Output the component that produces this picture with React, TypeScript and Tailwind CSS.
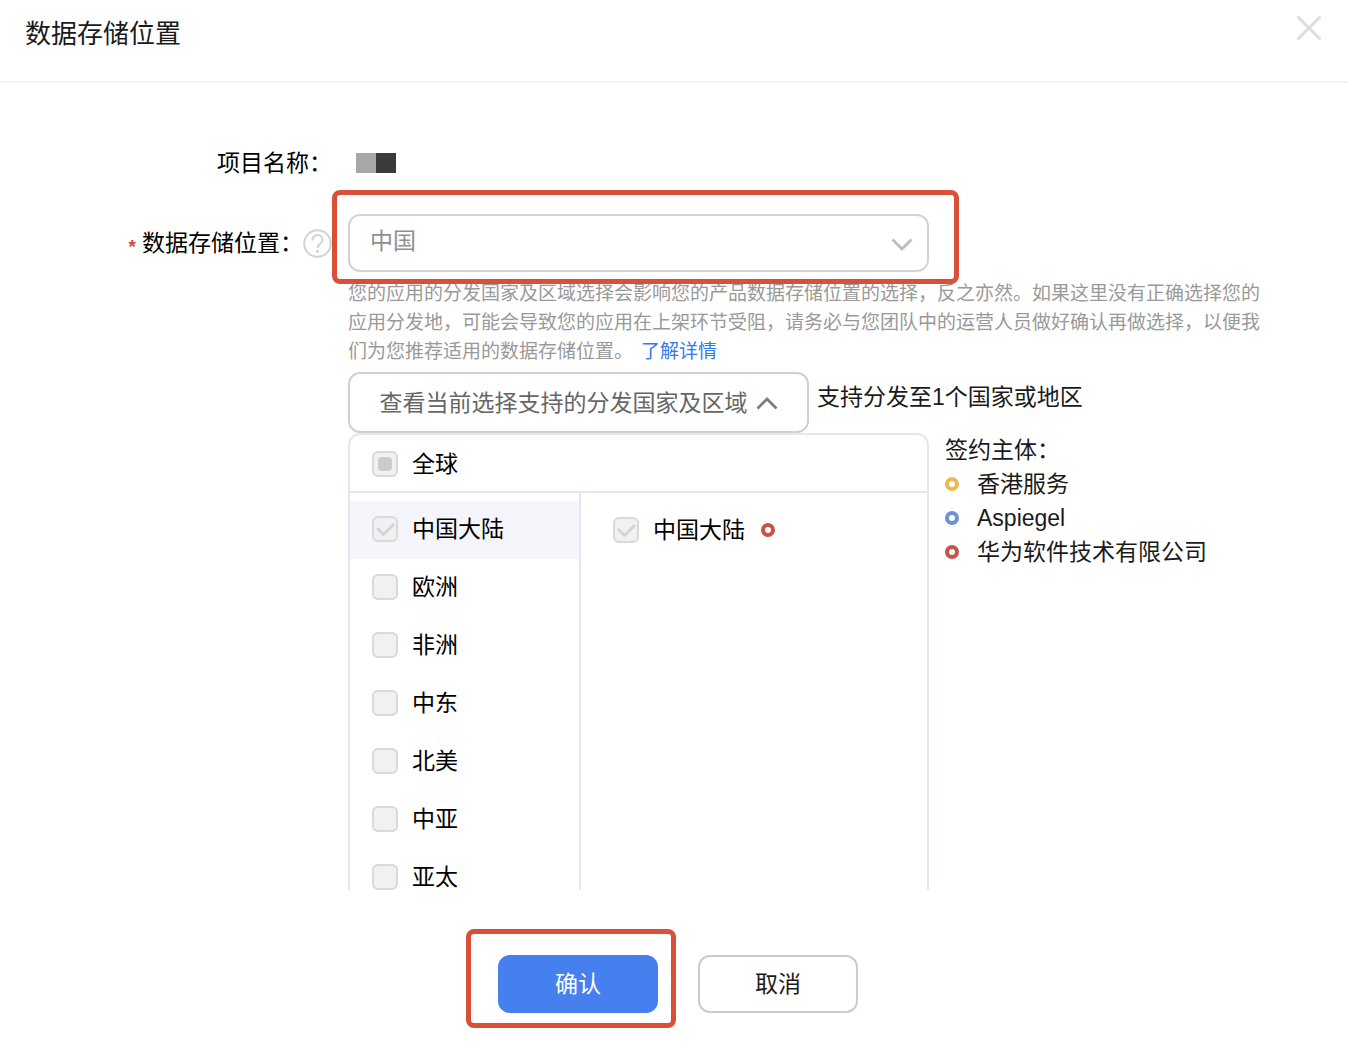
import React, { useState } from "react";

interface CheckBoxProps {
    id: string;
    state?: "none" | "checked" | "partial";
}

interface Entity {
    name: string;
    ring: string;
}

const REGIONS = ["中国大陆", "欧洲", "非洲", "中东", "北美", "中亚", "亚太"];

const ENTITIES: Entity[] = [
    { name: "香港服务", ring: "border-[#ebb94f]" },
    { name: "Aspiegel", ring: "border-[#6c92cf]" },
    { name: "华为软件技术有限公司", ring: "border-[#c4534a]" },
];

function CheckBox({ id, state = "none" }: CheckBoxProps) {
    return (
        <span className="grid shrink-0 place-items-center">
            <input
                id={id}
                type="checkbox"
                disabled
                checked={state !== "none"}
                readOnly
                className="col-start-1 row-start-1 size-[26px] appearance-none rounded-md border-2 border-[#d9d9d9] bg-[#f1f1f1]"
            />
            {state === "checked" && (
                <svg className="col-start-1 row-start-1 size-[26px]" viewBox="0 0 26 26" fill="none" stroke="#d2d2d2" strokeWidth="2.6">
                    <path d="M5 12l6.5 6.5L22 8" />
                </svg>
            )}
            {state === "partial" && <span className="col-start-1 row-start-1 size-[14px] rounded-sm bg-[#cbcbcb]" />}
        </span>
    );
}

function Ring({ color }: { color: string }) {
    return <span className={`size-[14px] shrink-0 rounded-full border-4 ${color}`} />;
}

export default function App() {
    const [open, setOpen] = useState(true);

    return (
        <div lang="zh-CN" className="min-h-screen bg-white pb-7 font-['Liberation_Sans','Noto_Sans_CJK_SC',sans-serif] text-[23px] leading-[34px] text-black">
            <header className="flex items-start justify-between border-b-2 border-[#f2f2f2] pt-4 pr-[26px] pb-[29px] pl-[25px]">
                <h1 className="text-[26px] leading-[36px] text-[#1a1a1a]">数据存储位置</h1>
                <button type="button" aria-label="关闭">
                    <svg className="size-[26px]" viewBox="0 0 26 26" fill="none" stroke="#dcdcdc" strokeWidth="3" strokeLinecap="round">
                        <path d="M2.5 1.5l21 21M23.5 1.5l-21 21" />
                    </svg>
                </button>
            </header>

            <main className="grid grid-cols-[332px_1fr] gap-x-4 pt-[63px]">
                <div className="text-right">项目名称：</div>
                <div className="flex items-center pl-2">
                    <span className="size-5 bg-[#a8a8a8]" />
                    <span className="size-5 bg-[#3b3b3b]" />
                </div>

                <div className="mt-[34px] flex h-[58px] items-center justify-end">
                    <span className="mr-1.5 pt-2 text-[19px] font-bold text-[#d9483b]">*</span>
                    <label htmlFor="location">数据存储位置：</label>
                    <svg className="size-[29px] shrink-0" viewBox="0 0 29 29" fill="none" stroke="#d2d2d2" strokeWidth="2">
                        <circle cx="14.5" cy="14.5" r="13.3" />
                        <path d="M9.4 11.5c0-3.4 2.2-5.4 5.1-5.4s5.1 2 5.1 4.8c0 3.8-5.1 4.2-5.1 8.1" />
                        <circle cx="14.5" cy="22.4" r="1.6" fill="#d2d2d2" stroke="none" />
                    </svg>
                </div>

                <div className="min-w-0">
                    <div className="relative mt-[34px] w-[581px]">
                        <select
                            id="location"
                            defaultValue="cn"
                            className="h-[58px] w-full appearance-none rounded-xl border-2 border-[#d4d4d4] bg-white px-5 pb-1 text-[#8f8f8f]"
                        >
                            <option value="cn">中国</option>
                        </select>
                        <svg className="pointer-events-none absolute top-6 right-4 h-3.5 w-[22px]" viewBox="0 0 22 14" fill="none" stroke="#bdbdbd" strokeWidth="2.8">
                            <path d="M1.5 1.5l9.5 9.5 9.5-9.5" />
                        </svg>
                        <div className="pointer-events-none absolute -top-6 -right-[30px] -bottom-3 -left-4 rounded-lg border-[5px] border-[#d95036]" />
                    </div>

                    <p className="mt-[7px] max-w-[930px] text-[19px] leading-[29px] text-[#999999]">
                        您的应用的分发国家及区域选择会影响您的产品数据存储位置的选择，反之亦然。如果这里没有正确选择您的应用分发地，可能会导致您的应用在上架环节受阻，请务必与您团队中的运营人员做好确认再做选择，以便我们为您推荐适用的数据存储位置。
                        <a href="#more" className="ml-2 text-[#3478f0]">了解详情</a>
                    </p>

                    <div className="mt-1.5 flex gap-2">
                        <button
                            type="button"
                            aria-expanded={open}
                            onClick={() => setOpen(!open)}
                            className="flex h-[61px] w-[461px] shrink-0 items-center justify-center gap-2 rounded-xl border-2 border-[#d0d0d0] text-[#666666]"
                        >
                            查看当前选择支持的分发国家及区域
                            <svg className="h-3.5 w-[22px]" viewBox="0 0 22 14" fill="none" stroke="#7d7d7d" strokeWidth="2.8">
                                <path d="M1.5 12.5L11 3l9.5 9.5" />
                            </svg>
                        </button>
                        <span className="pt-2 text-[#1a1a1a]">支持分发至1个国家或地区</span>
                    </div>

                    <div className="flex gap-4">
                        {open && (
                            <div className="flex h-[457px] w-[581px] shrink-0 flex-col overflow-hidden rounded-t-xl border-2 border-b-0 border-[#e4e7ed]">
                                <div className="flex shrink-0 items-center gap-3.5 border-b-2 border-[#e4e7ed] pt-3 pb-2.5 pl-[22px]">
                                    <CheckBox id="all" state="partial" />
                                    <label htmlFor="all">全球</label>
                                </div>
                                <div className="flex min-h-0 flex-1">
                                    <ul className="w-[231px] shrink-0 border-r-2 border-[#e4e7ed] pt-2">
                                        {REGIONS.map((region, i) => (
                                            <li key={region} className={`flex h-[58px] items-center gap-3.5 pb-0.5 pl-[22px] ${i === 0 ? "bg-[#f4f6fb]" : ""}`}>
                                                <CheckBox id={`region-${i}`} state={i === 0 ? "checked" : "none"} />
                                                <label htmlFor={`region-${i}`}>{region}</label>
                                            </li>
                                        ))}
                                    </ul>
                                    <div className="flex h-[58px] items-center pt-4 pl-8">
                                        <CheckBox id="country-cn" state="checked" />
                                        <label htmlFor="country-cn" className="mr-4 ml-3.5">中国大陆</label>
                                        <Ring color="border-[#c4534a]" />
                                    </div>
                                </div>
                            </div>
                        )}
                        <div className="text-[#1a1a1a]">
                            <div>签约主体：</div>
                            <ul>
                                {ENTITIES.map((entity) => (
                                    <li key={entity.name} className="flex items-center gap-[18px]">
                                        <Ring color={entity.ring} />
                                        {entity.name}
                                    </li>
                                ))}
                            </ul>
                        </div>
                    </div>
                </div>
            </main>

            <footer className="flex justify-center gap-10 pt-[65px] pl-2">
                <div className="relative">
                    <button type="button" className="h-[58px] w-40 rounded-xl bg-[#4680ee] text-white">确认</button>
                    <div className="pointer-events-none absolute -top-[26px] -right-[18px] -bottom-[15px] -left-8 rounded-lg border-[5px] border-[#d95036]" />
                </div>
                <button type="button" className="h-[58px] w-40 rounded-xl border-2 border-[#c9cbd2] text-[#1a1a1a]">取消</button>
            </footer>
        </div>
    );
}
